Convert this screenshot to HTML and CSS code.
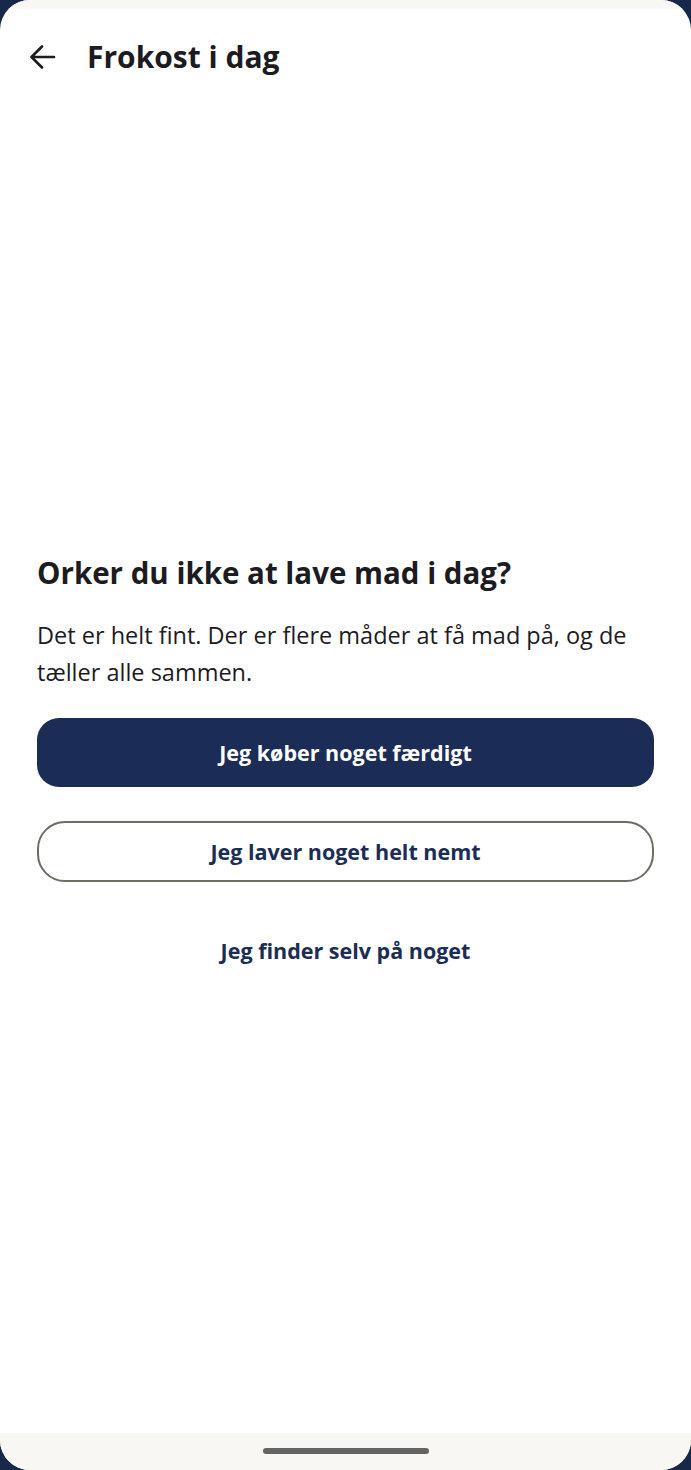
FILE: index.html
```html
<!DOCTYPE html>
<html lang="da">
<head>
  <meta charset="UTF-8">
  <meta name="viewport" content="width=device-width, initial-scale=1.0">
  <title>Frokost i dag</title>
  <link rel="stylesheet" href="styles.css">
</head>
<body>
  <div class="phone">
    <div class="status-bar"></div>

    <header class="app-bar">
      <button class="back-btn" aria-label="Tilbage">
        <svg width="28" height="28" viewBox="0 0 28 28" fill="none" stroke="#1c1b1f" stroke-width="2.6" stroke-linecap="round" stroke-linejoin="round">
          <path d="M25 14H3"/>
          <path d="M13 3.5L2.5 14L13 24.5"/>
        </svg>
      </button>
      <h1 class="app-title">Frokost i dag</h1>
    </header>

    <main class="content">
      <h2 class="question">Orker du ikke at lave mad i dag?</h2>
      <p class="intro">Det er helt fint. Der er flere måder at få mad på, og de tæller alle sammen.</p>

      <div class="choices">
        <button class="btn btn-primary">Jeg køber noget færdigt</button>
        <button class="btn btn-outline">Jeg laver noget helt nemt</button>
        <button class="btn btn-text">Jeg finder selv på noget</button>
      </div>
    </main>

    <div class="nav-bar">
      <div class="home-indicator"></div>
    </div>
  </div>
</body>
</html>
```

FILE: styles.css
```css
body {
  margin: 0;
  background-color: #172849;
  font-family: "Open Sans", "Noto Sans", sans-serif;
  color: #1c1b1f;
}
.phone {
  height: 1470px;
  background-color: #ffffff;
  border-radius: 30px;
  overflow: hidden;
  display: flex;
  flex-direction: column;
}
.status-bar {
  height: 9px;
  background-color: #f8f7f3;
}
.app-bar {
  display: flex;
  align-items: center;
  height: 95px;
  padding: 0 0 0 29px;
}
.back-btn {
  background: none;
  border: none;
  padding: 0;
  width: 28px;
  height: 28px;
  margin-right: 30px;
  cursor: pointer;
}
.app-title {
  margin: 0;
  font-size: 30px;
  font-weight: 700;
}
.content {
  flex: 1;
  padding: 451px 37px 0 37px;
}
.question {
  margin: 0;
  font-size: 29.5px;
  font-weight: 700;
  line-height: 36px;
}
.intro {
  margin: 26px 0 0 0;
  font-size: 23.5px;
  line-height: 37px;
}
.choices {
  display: flex;
  flex-direction: column;
  gap: 34px;
  margin-top: 27px;
}
.btn {
  font-family: inherit;
  font-size: 21.5px;
  font-weight: 700;
  cursor: pointer;
  width: 100%;
}
.btn-primary {
  height: 69px;
  border: none;
  border-radius: 22px;
  background-color: #1b2d56;
  color: #ffffff;
}
.btn-outline {
  height: 61px;
  border: 2px solid #6f6c64;
  border-radius: 28px;
  background-color: #ffffff;
  color: #1b2d56;
}
.btn-text {
  height: 68px;
  border: none;
  background: none;
  color: #1b2d56;
}
.nav-bar {
  height: 37px;
  background-color: #f8f7f3;
  display: flex;
  justify-content: center;
  padding-top: 15px;
  box-sizing: border-box;
}
.home-indicator {
  width: 166px;
  height: 6px;
  border-radius: 3px;
  background-color: #646462;
}
```
